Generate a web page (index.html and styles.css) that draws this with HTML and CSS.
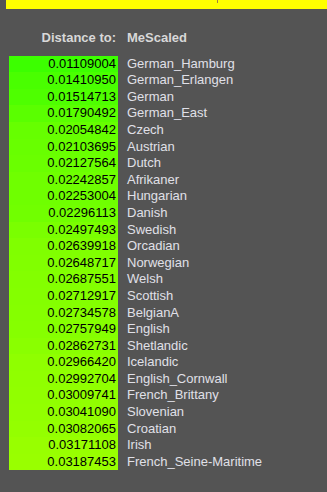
FILE: index.html
```html
<!DOCTYPE html>
<html>
<head>
<meta charset="utf-8">
<link rel="stylesheet" href="styles.css">
</head>
<body>
<div class="topbar"><span class="tick"></span></div>
<div class="table">
  <div class="head num">Distance to:</div><div class="head name">MeScaled</div>
  <div class="num" style="background:#3cff00">0.01109004</div><div class="name">German_Hamburg</div>
  <div class="num" style="background:#49ff00">0.01410950</div><div class="name">German_Erlangen</div>
  <div class="num" style="background:#4eff00">0.01514713</div><div class="name">German</div>
  <div class="num" style="background:#5aff00">0.01790492</div><div class="name">German_East</div>
  <div class="num" style="background:#66ff00">0.02054842</div><div class="name">Czech</div>
  <div class="num" style="background:#68ff00">0.02103695</div><div class="name">Austrian</div>
  <div class="num" style="background:#6aff00">0.02127564</div><div class="name">Dutch</div>
  <div class="num" style="background:#6fff00">0.02242857</div><div class="name">Afrikaner</div>
  <div class="num" style="background:#6fff00">0.02253004</div><div class="name">Hungarian</div>
  <div class="num" style="background:#71ff00">0.02296113</div><div class="name">Danish</div>
  <div class="num" style="background:#7aff00">0.02497493</div><div class="name">Swedish</div>
  <div class="num" style="background:#80ff00">0.02639918</div><div class="name">Orcadian</div>
  <div class="num" style="background:#81ff00">0.02648717</div><div class="name">Norwegian</div>
  <div class="num" style="background:#83ff00">0.02687551</div><div class="name">Welsh</div>
  <div class="num" style="background:#84ff00">0.02712917</div><div class="name">Scottish</div>
  <div class="num" style="background:#85ff00">0.02734578</div><div class="name">BelgianA</div>
  <div class="num" style="background:#86ff00">0.02757949</div><div class="name">English</div>
  <div class="num" style="background:#8aff00">0.02862731</div><div class="name">Shetlandic</div>
  <div class="num" style="background:#8fff00">0.02966420</div><div class="name">Icelandic</div>
  <div class="num" style="background:#90ff00">0.02992704</div><div class="name">English_Cornwall</div>
  <div class="num" style="background:#91ff00">0.03009741</div><div class="name">French_Brittany</div>
  <div class="num" style="background:#92ff00">0.03041090</div><div class="name">Slovenian</div>
  <div class="num" style="background:#94ff00">0.03082065</div><div class="name">Croatian</div>
  <div class="num" style="background:#98ff00">0.03171108</div><div class="name">Irish</div>
  <div class="num" style="background:#99ff00">0.03187453</div><div class="name">French_Seine-Maritime</div>
</div>
</body>
</html>
```
FILE: styles.css
```css
html, body {
  margin: 0;
  padding: 0;
  background: #545454;
  font-family: "Liberation Sans", Arial, sans-serif;
  font-size: 13px;
}
.topbar {
  position: relative;
  margin-left: 6px;
  height: 9px;
  background: #ffff00;
}
.tick {
  position: absolute;
  left: 211px;
  top: 0;
  width: 1px;
  height: 3px;
  background: #a08040;
}
.table {
  display: grid;
  grid-template-columns: 109px 1fr;
  column-gap: 9px;
  margin-left: 9px;
  margin-top: 21px;
  line-height: 16.6px;
}
.num {
  text-align: right;
  padding-right: 2px;
  color: #000;
}
.name {
  color: #e0e0e8;
  white-space: nowrap;
}
.head {
  font-weight: bold;
  color: #d8d8d8;
  background: none;
  margin-bottom: 9px;
}
.head.num {
  color: #d8d8d8;
}
```
